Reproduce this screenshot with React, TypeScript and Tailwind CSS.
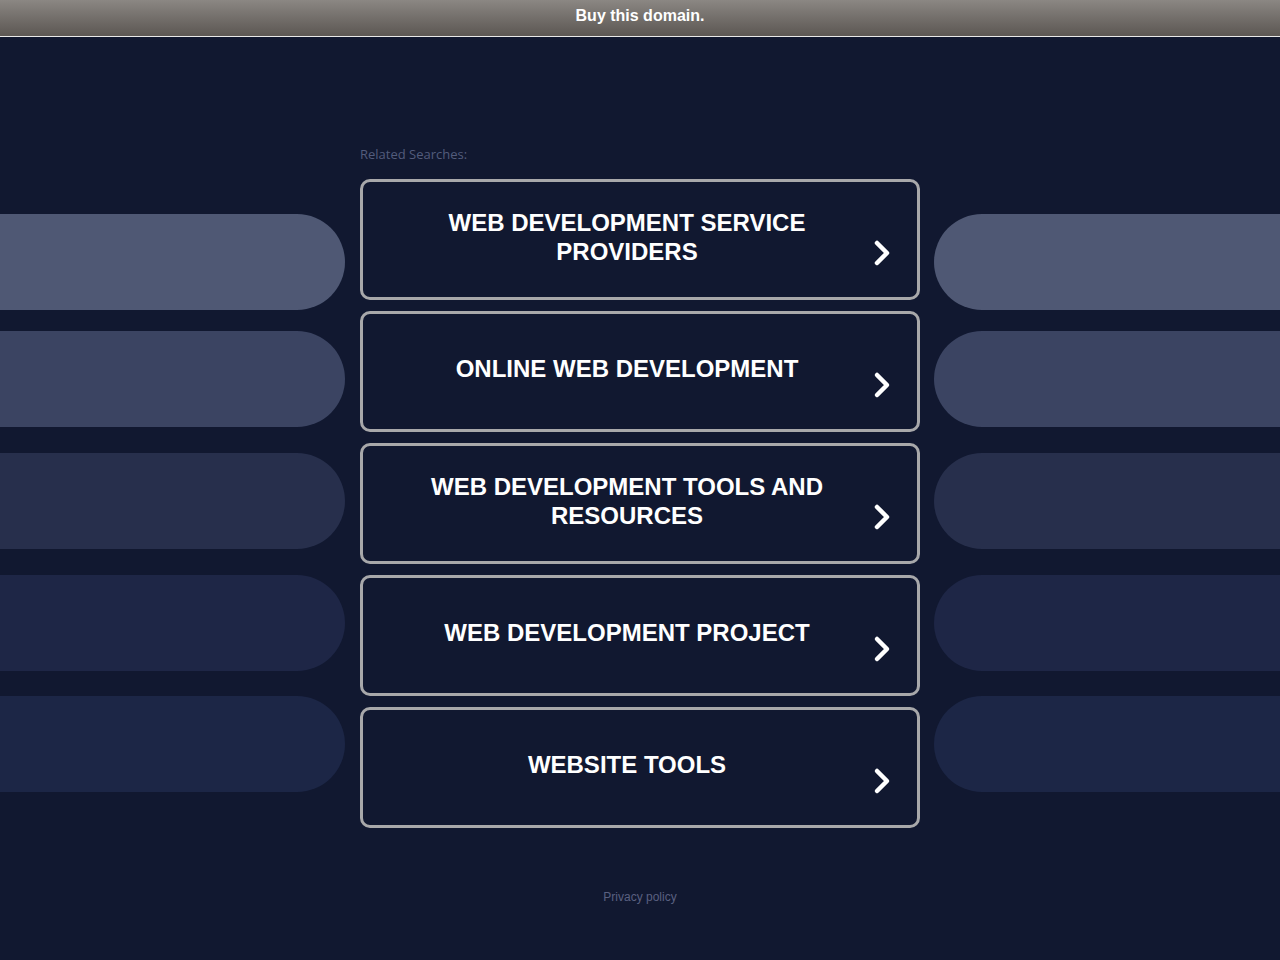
import React from "react";

const items = [
  ["WEB DEVELOPMENT SERVICE", "PROVIDERS"],
  ["ONLINE WEB DEVELOPMENT"],
  ["WEB DEVELOPMENT TOOLS AND", "RESOURCES"],
  ["WEB DEVELOPMENT PROJECT"],
  ["WEBSITE TOOLS"],
];

const pillColors = ["bg-[#4f5874]", "bg-[#3b4462]", "bg-[#272f4c]", "bg-[#1e2646]", "bg-[#1c2646]"];
const pillMargins = ["mt-[177px]", "mt-[21px]", "mt-[26px]", "mt-[26px]", "mt-[25px]"];

function Chevron() {
  return (
    <svg width="22" height="30" viewBox="0 0 22 30" fill="none">
      <path d="M6 5 L16 15 L6 25" stroke="white" strokeWidth="4.5" strokeLinecap="round" strokeLinejoin="round" />
    </svg>
  );
}

export default function App() {
  return (
    <div className="w-[1280px] h-[960px] bg-[#111830] flex flex-col font-['Liberation_Sans',Arial,sans-serif]">
      <div className="h-[37px] shrink-0 bg-gradient-to-b from-[#8b8783] to-[#5c5753] border-b border-[#e8e8e8] flex justify-center pt-[8px]">
        <span className="text-white font-bold text-[16px] leading-[16px]">Buy this domain.</span>
      </div>
      <div className="flex">
        <div className="w-[345px] flex flex-col">
          {pillColors.map((c, i) => (
            <div key={i} className={`${pillMargins[i]} h-[96px] rounded-r-[48px] ${c}`} />
          ))}
        </div>
        <div className="w-[560px] ml-[15px] flex flex-col">
          <div className="mt-[110px] h-[32px] text-[13px] text-[#535c7c] font-['Open_Sans',sans-serif] leading-[14px]">Related Searches:</div>
          <div className="flex flex-col gap-[11px]">
            {items.map((lines, i) => (
              <div key={i} className="h-[121px] border-[3px] border-[#a8a8aa] rounded-[10px] relative flex justify-center pt-[26px]">
                <div className={`w-[420px] mr-[26px] text-center text-white font-bold text-[24px] leading-[29px] ${lines.length === 1 ? "pt-[14px]" : ""}`}>
                  {lines.map((l, j) => (
                    <div key={j}>{l}</div>
                  ))}
                </div>
                <div className="absolute left-[508px] top-[56px]">
                  <Chevron />
                </div>
              </div>
            ))}
          </div>
          <div className="mt-[60px] text-center text-[12px] text-[#5a6080]">Privacy policy</div>
        </div>
        <div className="w-[346px] ml-[14px] flex flex-col">
          {pillColors.map((c, i) => (
            <div key={i} className={`${pillMargins[i]} h-[96px] rounded-l-[48px] ${c}`} />
          ))}
        </div>
      </div>
    </div>
  );
}
